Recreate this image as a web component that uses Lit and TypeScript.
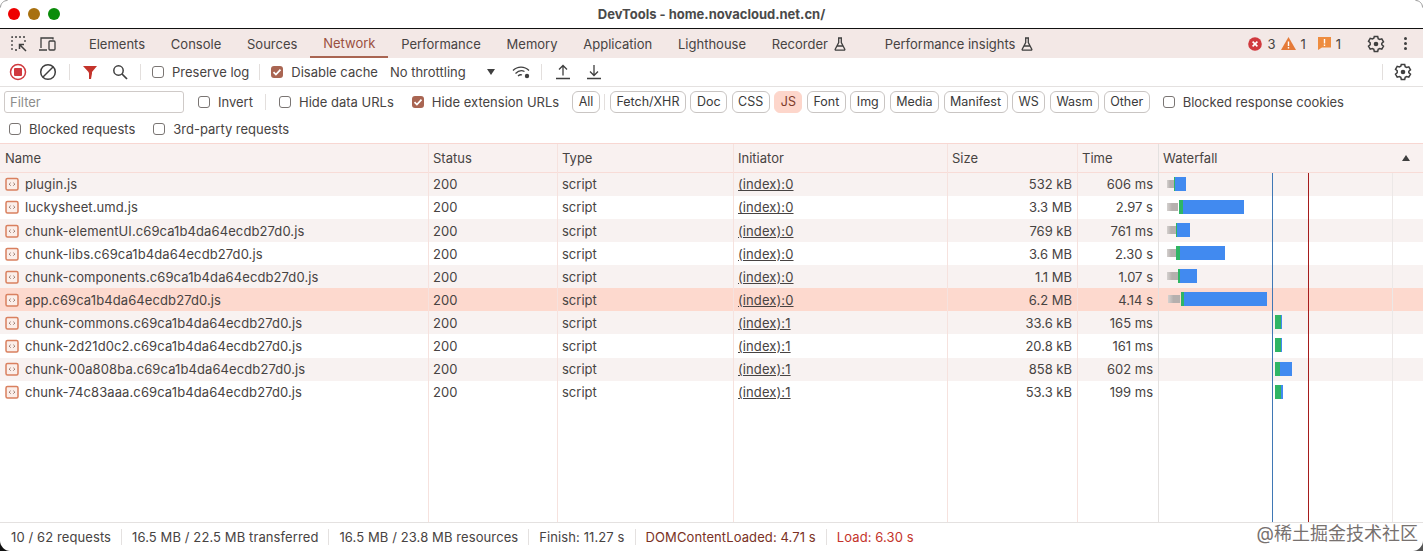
import { LitElement, css, html, svg } from 'lit';
import { customElement } from 'lit/decorators.js';

const TABS = ['Elements', 'Console', 'Sources', 'Network', 'Performance', 'Memory', 'Application', 'Lighthouse', 'Recorder', 'Performance insights'];
const TYPES = ['Fetch/XHR', 'Doc', 'CSS', 'JS', 'Font', 'Img', 'Media', 'Manifest', 'WS', 'Wasm', 'Other'];

// wait/green/blue positions are measured from the left edge of the waterfall column
const ROWS = [
  { name: 'plugin.js', size: '532 kB', time: '606 ms', init: '(index):0', gray: [9, 16], green: [16, 17], end: 28 },
  { name: 'luckysheet.umd.js', size: '3.3 MB', time: '2.97 s', init: '(index):0', gray: [9, 20], green: [21, 25], end: 86 },
  { name: 'chunk-elementUI.c69ca1b4da64ecdb27d0.js', size: '769 kB', time: '761 ms', init: '(index):0', gray: [9, 18], green: [18, 19], end: 32 },
  { name: 'chunk-libs.c69ca1b4da64ecdb27d0.js', size: '3.6 MB', time: '2.30 s', init: '(index):0', gray: [9, 18], green: [18, 22], end: 67 },
  { name: 'chunk-components.c69ca1b4da64ecdb27d0.js', size: '1.1 MB', time: '1.07 s', init: '(index):0', gray: [9, 20], green: [20, 22], end: 39 },
  { name: 'app.c69ca1b4da64ecdb27d0.js', size: '6.2 MB', time: '4.14 s', init: '(index):0', gray: [10, 22], green: [23, 26], end: 109, selected: true },
  { name: 'chunk-commons.c69ca1b4da64ecdb27d0.js', size: '33.6 kB', time: '165 ms', init: '(index):1', gray: [], green: [117, 123], end: 124 },
  { name: 'chunk-2d21d0c2.c69ca1b4da64ecdb27d0.js', size: '20.8 kB', time: '161 ms', init: '(index):1', gray: [], green: [117, 123], end: 124 },
  { name: 'chunk-00a808ba.c69ca1b4da64ecdb27d0.js', size: '858 kB', time: '602 ms', init: '(index):1', gray: [], green: [117, 122], end: 134 },
  { name: 'chunk-74c83aaa.c69ca1b4da64ecdb27d0.js', size: '53.3 kB', time: '199 ms', init: '(index):1', gray: [], green: [117, 123], end: 125 },
];

const COLS = [428, 557, 733, 947, 1077];

const icon = (w: number, h: number, body: unknown, cls = '') =>
  html`<svg class="icon ${cls}" width=${w} height=${h} viewBox="0 0 ${w} ${h}" fill="none" stroke="#3f3f3f" stroke-width="1.3">${body}</svg>`;

const flask = () => icon(12, 14, svg`<path d="M4 1h4M4.7 1v4.6L1.2 12.2c-.2.5.1.9.6.9h8.4c.5 0 .8-.4.6-.9L7.3 5.6V1M3.2 9h5.6"/>`);

const gear = (cls = '') => icon(18, 18, svg`<path stroke-width="1.5" d="M7.3 1.5h3.4l.5 2.2 1.4.8 2.2-.7 1.7 3-1.7 1.5v1.4l1.7 1.5-1.7 3-2.2-.7-1.4.8-.5 2.2H7.3l-.5-2.2-1.4-.8-2.2.7-1.7-3 1.7-1.5V7.8L1.5 6.3l1.7-3 2.2.7 1.4-.8z"/><circle cx="9" cy="9" r="2.3" fill="#3f3f3f" stroke="none"/>`, cls);

const check = (label: string, checked = false, cls = '') => html`
  <label class="check ${cls}">
    <span class="box ${checked ? 'on' : ''}">
      ${checked ? html`<svg width="12" height="12" viewBox="0 0 12 12" fill="none" stroke="#fff" stroke-width="1.7"><path d="M2.5 6.2l2.4 2.4 4.6-5"/></svg>` : ''}
    </span>
    ${label}
  </label>`;

@customElement('app-root')
export class AppRoot extends LitElement {
  static styles = css`
    :host {
      display: flex;
      flex-direction: column;
      position: relative;
      height: 551px;
      overflow: hidden;
      background: #fff;
      color: #474342;
      font: 13px/16px Inter, "Noto Sans CJK SC", sans-serif;
    }

    .icon {
      display: block;
      flex: none;
    }

    .title {
      display: flex;
      align-items: center;
      justify-content: center;
      position: relative;
      height: 29px;
      box-sizing: border-box;
      border-bottom: 1px solid #111;
      font-weight: 700;
      color: #4a4a4a;
    }

    .lights {
      position: absolute;
      left: 8px;
      top: 8px;
      display: flex;
      gap: 8px;
    }

    .lights i {
      width: 12px;
      height: 12px;
      border-radius: 50%;
    }

    .red { background: #ee0000; }
    .amber { background: #a8700f; }
    .lime { background: #0a8c0a; }

    .tabs {
      display: flex;
      align-items: center;
      height: 29px;
      background: #f3e8e6;
    }

    .tools {
      display: flex;
      gap: 10px;
      padding-left: 10px;
      width: 76px;
      box-sizing: border-box;
    }

    .tab {
      display: flex;
      align-items: center;
      gap: 6px;
      height: 29px;
      padding: 0 12.9px;
      box-sizing: border-box;
    }

    .tab.active {
      color: #9a4f3e;
      border-bottom: 2px solid #a96552;
    }

    .tab.wide {
      margin-left: 13px;
    }

    .counts {
      display: flex;
      align-items: center;
      position: absolute;
      right: 16px;
      top: 29px;
      height: 29px;
    }

    .count {
      display: flex;
      align-items: center;
      gap: 5px;
      margin-right: 6px;
    }

    .count.tight {
      gap: 4px;
      margin-right: 12px;
    }

    .count.msg {
      margin-right: 8px;
    }

    .gear-tab {
      margin: 0 19px 0 18px;
    }

    .bar {
      display: flex;
      align-items: center;
      height: 29px;
      border-bottom: 1px solid #e4e1e0;
      padding-left: 9px;
      box-sizing: border-box;
    }

    .sep {
      width: 1px;
      height: 16px;
      background: #e3dfdd;
      flex: none;
    }

    .check {
      display: flex;
      align-items: center;
      gap: 8px;
      white-space: nowrap;
    }

    .box {
      display: flex;
      align-items: center;
      justify-content: center;
      width: 10px;
      height: 10px;
      border: 1px solid #7a7573;
      border-radius: 3px;
      flex: none;
    }

    .box.on {
      width: 12px;
      height: 12px;
      border: none;
      background: #a96552;
    }

    .filters {
      display: flex;
      align-items: center;
      height: 29px;
      padding-left: 4px;
    }

    .input {
      width: 173px;
      height: 20px;
      border: 1px solid #cfcac8;
      border-radius: 3px;
      padding-left: 5px;
      line-height: 20px;
      color: #8c8c8c;
      margin-right: 14px;
    }

    .pill {
      height: 20px;
      padding: 0 5.5px;
      line-height: 20px;
      border: 1px solid #c9c5c3;
      border-radius: 6px;
      color: #3a3a3a;
      font-size: 12.5px;
      white-space: nowrap;
    }

    .pill.on {
      border-color: #fdd6cb;
      background: #fdd6cb;
      color: #7e3b2b;
    }

    .pills {
      display: flex;
      align-items: center;
      gap: 4.5px;
    }

    .blocked {
      display: flex;
      align-items: center;
      gap: 18px;
      height: 28px;
      padding: 0 0 1px 9px;
      box-sizing: border-box;
      border-bottom: 1px solid #f8d7d2;
    }

    .table {
      position: relative;
      flex: 1;
      min-height: 0;
    }

    .row {
      display: grid;
      grid-template-columns: 428px 129px 176px 214px 130px 81px 1fr;
      align-items: center;
      height: 23.1px;
    }

    .row > div {
      padding-left: 5px;
      white-space: nowrap;
    }

    .row.head {
      height: 28.8px;
      box-sizing: border-box;
      background: #f9f1f0;
      border-bottom: 1px solid #f8dcd7;
    }

    .row.odd {
      background: #f8f2f1;
    }

    .row.selected {
      background: #fdd9ce;
    }

    .row > .num {
      text-align: right;
      padding: 0 5px 0 0;
    }

    .row > .name {
      display: flex;
      align-items: center;
      gap: 6px;
      letter-spacing: 0.1px;
    }

    .row > .fall {
      position: relative;
      height: 100%;
      padding: 0;
    }

    .row > .fall-head {
      display: flex;
      align-items: center;
      padding-left: 5px;
    }

    .link {
      text-decoration: underline;
      letter-spacing: 0.1px;
    }

    .sort {
      position: absolute;
      right: 13px;
      top: 11px;
      width: 0;
      height: 0;
      border: 4px solid transparent;
      border-top: 0;
      border-bottom: 6px solid #3f3f3f;
    }

    .seg {
      position: absolute;
      top: 4px;
      height: 14px;
    }

    .seg.gray {
      top: 7px;
      height: 8px;
      background: linear-gradient(90deg, #d5d1cf, #b5b0ae 45%);
    }

    .seg.green {
      background: #2fb565;
    }

    .seg.blue {
      background: #418af0;
    }

    .line {
      position: absolute;
      top: 0;
      bottom: 0;
      width: 1px;
      background: #f6e2de;
    }

    .line.body {
      top: 29px;
    }

    .line.fall-edge { background: #e4e1e0; }
    .line.grid { background: #ece8e7; }
    .line.dom-mark { background: #3f78b5; }
    .line.load-mark { background: #a61c1c; }

    .status {
      display: flex;
      align-items: center;
      height: 29px;
      border-top: 1px solid #e4e1e0;
      box-sizing: border-box;
      padding-left: 11px;
      letter-spacing: 0.1px;
    }

    .status span {
      padding-right: 10px;
      margin-right: 10px;
      border-right: 1px solid #e4e1e0;
      white-space: nowrap;
    }

    .status .dom {
      color: #7a3124;
    }

    .status .load {
      color: #c4332b;
      border: none;
    }

    .mark {
      position: absolute;
      right: 5px;
      bottom: 6px;
      font-size: 18px;
      line-height: 22px;
      color: #77716f;
      text-shadow: 0 0 2px #fff;
    }

    .corner { position: absolute; }
    .tl { left: 0; top: 0; }
    .tr { right: 0; top: 0; }
    .bl { left: 0; bottom: 0; }
    .br { right: 0; bottom: 0; }

    .fill { flex: 1; }
    .ml10 { margin-left: 10px; }
    .ml11 { margin-left: 11px; }
    .ml12 { margin-left: 12px; }
    .ml13 { margin-left: 13px; }
    .ml15 { margin-left: 15px; }
    .ml17 { margin-left: 17px; }
    .ml18 { margin-left: 18px; }

    .caret {
      width: 0;
      height: 0;
      border: 4px solid transparent;
      border-top: 6px solid #3f3f3f;
      border-bottom: 0;
      margin-left: 21px;
    }
  `;

  private renderBars(r: (typeof ROWS)[number]) {
    const seg = (cls: string, a: number, b: number) =>
      html`<i class="seg ${cls}" style="left:${a}px;width:${b - a}px"></i>`;
    return html`
      ${r.gray.length ? seg('gray', r.gray[0], r.gray[1]) : ''}
      ${seg('green', r.green[0], r.green[1])}
      ${seg('blue', r.green[1], r.end)}`;
  }

  render() {
    const docIcon = icon(14, 14, svg`<rect x="1" y="1.5" width="12" height="11.5" rx="1.5" stroke="#d9805f" stroke-width="1.5" fill="#fbeee9"/><path d="M5.6 5.8L4.2 7.2l1.4 1.4M8.4 5.8l1.4 1.4-1.4 1.4" stroke="#8a6a5f" stroke-width="1"/>`);
    return html`
      <div class="title">
        <div class="lights"><i class="red"></i><i class="amber"></i><i class="lime"></i></div>
        DevTools - home.novacloud.net.cn/
      </div>

      <div class="tabs">
        <div class="tools">
          ${icon(18, 18, svg`<path stroke-dasharray="2 2" d="M2 15V2h13"/><path stroke-dasharray="2 2" d="M15 5v3M5 15h3"/><path stroke-width="1.5" d="M16 16L9.5 9.5M9.5 14V9.5H14"/>`)}
          ${icon(18, 18, svg`<path d="M1 15h8M3 13V3h12v1.5"/><rect x="11" y="6" width="6" height="9" rx="1"/>`)}
        </div>
        ${TABS.map((t, i) => html`
          <div class="tab ${t === 'Network' ? 'active' : ''} ${i === 9 ? 'wide' : ''}">
            ${t}${i >= 8 ? flask() : ''}
          </div>`)}
      </div>
      <div class="counts">
        <div class="count">
          ${icon(14, 14, svg`<circle cx="7" cy="7" r="6.8" fill="#d0393e" stroke="none"/><path d="M4.6 4.6l4.8 4.8M9.4 4.6l-4.8 4.8" stroke="#fff" stroke-width="1.6"/>`)}3
        </div>
        <div class="count tight">
          ${icon(15, 13, svg`<path d="M7.5 0L15 13H0z" fill="#e57a38" stroke="none"/><path d="M7.5 4.5v4.5M7.5 10v1.5" stroke="#fff" stroke-width="1.4"/>`)}1
        </div>
        <div class="count msg">
          ${icon(13, 13, svg`<path d="M0 0h13v10.5H4L0 13z" fill="#ee8c3f" stroke="none"/><path d="M6.5 2v4.5M6.5 7.5v1.5" stroke="#fff" stroke-width="1.4"/>`)}1
        </div>
        ${gear('gear-tab')}
        ${icon(3, 13, svg`<circle cx="1.5" cy="1.5" r="1.5" fill="#3f3f3f" stroke="none"/><circle cx="1.5" cy="6.5" r="1.5" fill="#3f3f3f" stroke="none"/><circle cx="1.5" cy="11.5" r="1.5" fill="#3f3f3f" stroke="none"/>`)}
      </div>

      <div class="bar">
        ${icon(18, 18, svg`<circle cx="9" cy="9" r="7.5" stroke="#d0393e" stroke-width="1.5"/><rect x="5" y="5" width="8" height="8" rx="1" fill="#d0393e" stroke="none"/>`)}
        ${icon(18, 18, svg`<circle cx="9" cy="9" r="7.3" stroke-width="1.5"/><path d="M4 14L14 4" stroke-width="1.5"/>`, 'ml12')}
        <div class="sep ml12"></div>
        ${icon(14, 14, svg`<path d="M0 1h14L9 7v1.5l-1 5.5H6V8.5L5.5 7z" fill="#c4332b" stroke="none"/>`, 'ml13')}
        ${icon(16, 16, svg`<circle cx="6.5" cy="6.5" r="4.7" stroke-width="1.5"/><path d="M10 10l5 5" stroke-width="1.7"/>`, 'ml15')}
        <div class="sep ml12"></div>
        ${check('Preserve log', false, 'ml11')}
        <div class="sep ml10"></div>
        ${check('Disable cache', true, 'ml11')}
        <span class="ml12">No throttling</span>
        <span class="caret"></span>
        ${icon(19, 15, svg`<path d="M1 5.5C5.5 1 12.5 1 17 5.5M3.5 8.5C6.5 5.5 10 5.2 12.5 6.5M6 11c1.4-1.2 3-1.4 4-1"/><circle cx="15" cy="11" r="2.2" fill="#3f3f3f" stroke="none"/>`, 'ml17')}
        <div class="sep ml10"></div>
        ${icon(16, 16, svg`<path d="M1 14.5h14M8 11.5V2M4 5.5L8 1.5l4 4"/>`, 'ml13')}
        ${icon(16, 16, svg`<path d="M1 14.5h14M8 1v10M4 7.5l4 4 4-4"/>`, 'ml15')}
        <span class="fill"></span>
        <div class="sep"></div>
        ${gear('ml11')}
        <span class="ml11"></span>
      </div>

      <div class="filters">
        <div class="input">Filter</div>
        ${check('Invert')}
        <div class="sep ml12"></div>
        ${check('Hide data URLs', false, 'ml13')}
        ${check('Hide extension URLs', true, 'ml18')}
        <div class="pills ml13">
          <div class="pill">All</div>
          <div class="sep"></div>
          ${TYPES.map(t => html`<div class="pill ${t === 'JS' ? 'on' : ''}">${t}</div>`)}
        </div>
        ${check('Blocked response cookies', false, 'ml13')}
      </div>

      <div class="blocked">
        ${check('Blocked requests')}
        ${check('3rd-party requests')}
      </div>

      <div class="table">
        <div class="row head">
          <div>Name</div><div>Status</div><div>Type</div><div>Initiator</div><div>Size</div><div>Time</div>
          <div class="fall fall-head">Waterfall<i class="sort"></i></div>
        </div>
        ${ROWS.map((r, i) => html`
          <div class="row ${i % 2 === 0 ? 'odd' : ''} ${r.selected ? 'selected' : ''}">
            <div class="name">${docIcon}${r.name}</div>
            <div>200</div>
            <div>script</div>
            <div><span class="link">${r.init}</span></div>
            <div class="num">${r.size}</div>
            <div class="num">${r.time}</div>
            <div class="fall">${this.renderBars(r)}</div>
          </div>`)}
        ${COLS.map(x => html`<i class="line" style="left:${x}px"></i>`)}
        <i class="line fall-edge" style="left:1158px"></i>
        <i class="line body grid" style="left:1392px"></i>
        <i class="line body dom-mark" style="left:1272px"></i>
        <i class="line body load-mark" style="left:1308px"></i>
      </div>

      <div class="status">
        <span>10 / 62 requests</span>
        <span>16.5 MB / 22.5 MB transferred</span>
        <span>16.5 MB / 23.8 MB resources</span>
        <span>Finish: 11.27 s</span>
        <span class="dom">DOMContentLoaded: 4.71 s</span>
        <span class="load">Load: 6.30 s</span>
      </div>

      <div class="mark">@稀土掘金技术社区</div>

      <svg class="corner tl" width="8" height="8" fill="none" stroke="#9a9a9a"><path d="M.5 7.5C.5 3.5 3.5.5 7.5.5"/></svg>
      <svg class="corner tr" width="8" height="8" fill="none" stroke="#9a9a9a"><path d="M.5.5C4.5.5 7.5 3.5 7.5 7.5"/></svg>
      <svg class="corner bl" width="10" height="10"><path d="M0 0C0 5 5 10 10 10H0z" fill="#111"/></svg>
      <svg class="corner br" width="10" height="10"><path d="M10 0C10 5 5 10 0 10H10z" fill="#555"/></svg>
    `;
  }
}
